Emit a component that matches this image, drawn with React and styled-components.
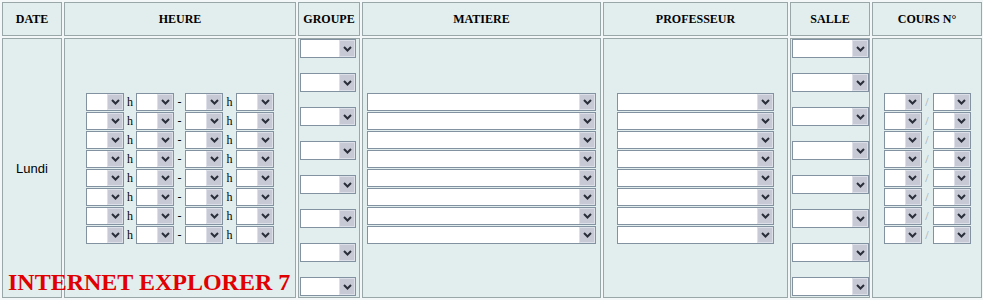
import React from 'react';
import styled, { createGlobalStyle } from 'styled-components';

const GlobalStyle = createGlobalStyle`
  body {
    margin: 0;
    background: #f3f7f7;
    font-family: "Liberation Serif", "Times New Roman", serif;
  }
`;

const columns = ['DATE', 'HEURE', 'GROUPE', 'MATIERE', 'PROFESSEUR', 'SALLE', 'COURS N°'];
const lines = [0, 1, 2, 3, 4, 5, 6, 7];

const Chevron = () => (
  <svg width="9" height="6" viewBox="0 0 9 6">
    <path d="M1 1 L4.5 4.5 L8 1" fill="none" stroke="#2a2e3a" strokeWidth="2" />
  </svg>
);

const Select = ({ width, height }) => (
  <Drop $w={width} $h={height}>
    <Arrow>
      <Chevron />
    </Arrow>
  </Drop>
);

export default function App() {
  return (
    <React.Fragment>
      <GlobalStyle />
      <Table>
        {columns.map(c => (
          <HeadCell key={c}>{c}</HeadCell>
        ))}

        <BodyCell>
          <Day>Lundi</Day>
        </BodyCell>

        <BodyCell>
          <Lines>
            {lines.map(i => (
              <Line key={i}>
                <Select width={38} height={18} />
                <Sep>h</Sep>
                <Select width={38} height={18} />
                <Sep $w={11}>-</Sep>
                <Select width={38} height={18} />
                <Sep $w={13}>h</Sep>
                <Select width={38} height={18} />
              </Line>
            ))}
          </Lines>
        </BodyCell>

        <BodyCell $top>
          <Stack>
            {lines.map(i => (
              <Select key={i} width={56} height={19} />
            ))}
          </Stack>
        </BodyCell>

        <BodyCell>
          <Lines>
            {lines.map(i => (
              <Select key={i} width={229} height={18} />
            ))}
          </Lines>
        </BodyCell>

        <BodyCell>
          <Lines>
            {lines.map(i => (
              <Select key={i} width={157} height={18} />
            ))}
          </Lines>
        </BodyCell>

        <BodyCell $top>
          <Stack>
            {lines.map(i => (
              <Select key={i} width={77} height={19} />
            ))}
          </Stack>
        </BodyCell>

        <BodyCell>
          <Lines>
            {lines.map(i => (
              <Line key={i}>
                <Select width={38} height={18} />
                <Sep $w={11} $light>/</Sep>
                <Select width={38} height={18} />
              </Line>
            ))}
          </Lines>
        </BodyCell>

        <Banner>INTERNET EXPLORER 7</Banner>
      </Table>
    </React.Fragment>
  );
}

const Table = styled.div`
  position: relative;
  display: grid;
  grid-template-columns: 60px 232px 62px 239px 185px 80px 110px;
  grid-template-rows: 34px 260px;
  gap: 2px;
  padding: 2px;
  width: max-content;
  background: #f3f7f7;
`;

const Cell = styled.div`
  box-sizing: border-box;
  background: #e2eded;
  border: 1px solid #9aa7a9;
`;

const HeadCell = styled(Cell)`
  display: flex;
  align-items: center;
  justify-content: center;
  font-size: 12px;
  font-weight: 700;
  color: #000;
  padding-top: 1px;
`;

const BodyCell = styled(Cell)`
  display: flex;
  justify-content: ${p => (p.$top ? 'flex-start' : 'center')};
  align-items: ${p => (p.$top ? 'flex-start' : 'center')};
  padding: ${p => (p.$top ? '0 0 0 1px' : '0')};
`;

const Day = styled.span`
  font-family: "Liberation Sans", Arial, sans-serif;
  font-size: 13px;
  color: #000;
`;

const Lines = styled.div`
  display: flex;
  flex-direction: column;
  gap: 1px;
  padding-top: 1px;
`;

const Stack = styled.div`
  display: flex;
  flex-direction: column;
  gap: 15px;
`;

const Line = styled.div`
  display: flex;
  align-items: center;
`;

const Sep = styled.span`
  width: ${p => p.$w || 12}px;
  text-align: center;
  font-size: 12px;
  line-height: 18px;
  color: ${p => (p.$light ? '#a0a8b0' : '#000')};
`;

const Drop = styled.div`
  box-sizing: border-box;
  width: ${p => p.$w}px;
  height: ${p => p.$h}px;
  display: flex;
  justify-content: flex-end;
  background: #fff;
  border: 1px solid #8392a0;
`;

const Arrow = styled.div`
  box-sizing: border-box;
  width: 16px;
  height: 100%;
  display: flex;
  align-items: center;
  justify-content: center;
  background: #c7cad5;
  border: 1px solid #dde0e8;
`;

const Banner = styled.div`
  position: absolute;
  left: 8px;
  top: 270px;
  font-size: 24px;
  line-height: 24px;
  font-weight: 700;
  color: #e00000;
  white-space: nowrap;
`;
